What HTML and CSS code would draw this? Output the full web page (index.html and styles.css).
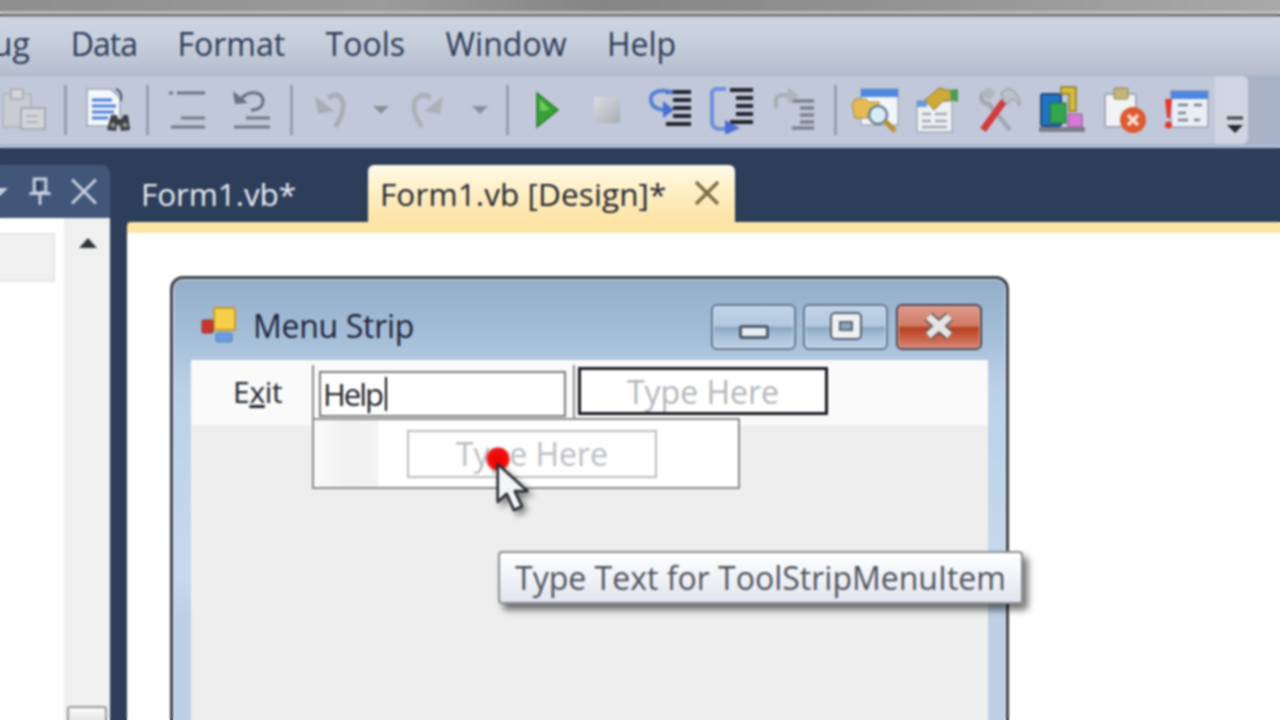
FILE: index.html
```html
<!DOCTYPE html>
<html lang="en">
<head>
<meta charset="utf-8">
<title>Menu Strip designer</title>
<link rel="stylesheet" href="styles.css">
</head>
<body>
<div class="app">
  <div class="topband"></div>
  <nav class="menubar">
    <span class="menu-debug">Debug</span>
    <span class="menu-item menu-data">Data</span>
    <span class="menu-item">Format</span>
    <span class="menu-item">Tools</span>
    <span class="menu-item">Window</span>
    <span class="menu-item">Help</span>
  </nav>
  <div class="toolrow">
    <div class="toolbar">
      <svg class="ico" viewBox="0 0 48 48"><rect x="3" y="8" width="28" height="33" rx="2" fill="#c9ccd2" stroke="#b3b6bc" stroke-width="2"/><rect x="11" y="3" width="12" height="10" fill="#d3d5d9" stroke="#b0b2b7" stroke-width="2"/><rect x="21" y="22" width="24" height="21" fill="#d2d4d9" stroke="#a8abb1" stroke-width="2"/><path d="M26 30h12M26 36h12" stroke="#b0b3b9" stroke-width="2"/></svg>
      <i class="sep"></i>
      <svg class="ico" viewBox="0 0 48 48"><path d="M3 3h24l9 9v28H3z" fill="#f4f7fc" stroke="#9aa4b8" stroke-width="1.500"/><path d="M8 14h20M8 20h24M8 26h22M8 32h16" stroke="#4d80d6" stroke-width="3"/><path d="M32 3c5 2 6 6 5 12" fill="none" stroke="#4a4f5c" stroke-width="2"/><path d="M23 44l4-15h6l1 4h4l1-4h5l2 15-9 1-1-6h-3l-1 6z" fill="#3d3f40"/><circle cx="29" cy="39" r="2.500" fill="#8c8f8e"/><circle cx="41" cy="39" r="2.500" fill="#8c8f8e"/></svg>
      <i class="sep"></i>
      <svg class="ico" viewBox="0 0 48 48"><path d="M5 7h4M13 7h28" stroke="#6d7380" stroke-width="3"/><path d="M17 32h24M7 41h34" stroke="#747a86" stroke-width="3"/></svg>
      <svg class="ico" viewBox="0 0 48 48"><path d="M15 15c2-10 22-12 22 0 0 7-7 9-12 9" fill="none" stroke="#6a707c" stroke-width="3"/><path d="M7 5l2 13 13-1z" fill="#6a707c"/><path d="M20 32h24M8 41h36" stroke="#747a86" stroke-width="3"/></svg>
      <i class="sep"></i>
      <svg class="ico" viewBox="0 0 48 48"><path d="M22 12c10-7 16 0 15 11-1 8-5 14-8 18" fill="none" stroke="#a9adb5" stroke-width="5"/><path d="M9 10l3 18 16-3z" fill="#a9adb5"/></svg>
      <svg class="drop" viewBox="0 0 16 10"><path d="M0 1h16L8 9z" fill="#8b8f98"/></svg>
      <svg class="ico" viewBox="0 0 48 48"><path d="M27 12C17 5 9 12 10 23c1 8 5 14 8 18" fill="none" stroke="#adb1b9" stroke-width="5"/><path d="M39 10l-3 18-16-3z" fill="#adb1b9"/></svg>
      <svg class="drop" viewBox="0 0 16 10"><path d="M0 1h16L8 9z" fill="#8b8f98"/></svg>
      <i class="sep"></i>
      <svg class="ico" viewBox="0 0 48 48"><path d="M15 7v34l21-17z" fill="#36a035" stroke="#2a7d2c" stroke-width="1.500"/><path d="M18 13v12l10-1z" fill="#6ecb5c"/></svg>
      <svg class="ico" viewBox="0 0 48 48"><defs><linearGradient id="st" x1="0" y1="0" x2="1" y2="1"><stop offset="0" stop-color="#dcdee3"/><stop offset="1" stop-color="#a9acb3"/></linearGradient></defs><rect x="11" y="11" width="26" height="26" rx="2" fill="url(#st)"/></svg>
      <svg class="ico" viewBox="0 0 48 48"><path d="M19 6h25M26 14h18M26 22h18M26 30h18M19 38h25" stroke="#22242b" stroke-width="4"/><path d="M26 7C14 2 2 6 4 15c1 7 9 9 16 9" fill="none" stroke="#5a7fd6" stroke-width="4"/><path d="M16 15l11 9-11 8z" fill="#4a6fd2"/></svg>
      <svg class="ico" viewBox="0 0 48 48"><path d="M22 4h23M28 12h17M28 20h17M28 28h17M22 36h23" stroke="#22242b" stroke-width="4"/><path d="M18 3H9C5 3 4 5 4 8v27c0 6 4 8 9 8h8" fill="none" stroke="#6f8fd8" stroke-width="4"/><path d="M17 34l15 8-15 7z" fill="#4a6fd2"/></svg>
      <svg class="ico" viewBox="0 0 48 48"><path d="M19 15h22M27 22h14M27 29h14M27 36h14M19 42h22" stroke="#7c818b" stroke-width="3.500"/><path d="M3 22v-8c0-4 3-5 7-5h8" fill="none" stroke="#a9adb5" stroke-width="4"/><path d="M15 1l11 9-11 8z" fill="#b0b4bc"/></svg>
      <i class="sep"></i>
      <svg class="ico" viewBox="0 0 48 48"><rect x="10" y="3" width="37" height="36" fill="#f2f5fa" stroke="#8d97a9"/><rect x="10" y="3" width="37" height="8" fill="#4f86df"/><path d="M1 19l3-6h11l3 3h10v16H4z" fill="#e5bb57" stroke="#a2873f"/><circle cx="27" cy="29" r="9" fill="#d9ecf6" stroke="#6d7f8b" stroke-width="2.500"/><path d="M34 35l10 10" stroke="#b98f35" stroke-width="5"/></svg>
      <svg class="ico" viewBox="0 0 48 48"><rect x="5" y="15" width="35" height="31" fill="#eef1f4" stroke="#8b93a1"/><rect x="5" y="15" width="10" height="6" fill="#6b96de"/><path d="M10 28h9M23 28h12M10 35h9M23 35h12M10 41h25" stroke="#a2a8b2" stroke-width="2.500"/><path d="M13 14L27 2l9 2c4 0 8 0 8 4 0 5-8 7-13 7l-9 9z" fill="#cfa93a" stroke="#8f7a3b"/><path d="M38 4l8-1v13l-7-2z" fill="#4d9a51"/></svg>
      <svg class="ico" viewBox="0 0 48 48"><path d="M9 7c-4 5 0 11 6 11L36 44" fill="none" stroke="#a3a8b0" stroke-width="4.500"/><path d="M15 2c-4 1-7 2-8 6l8 6 6-5c0-4-2-6-6-7z" fill="#b1b5bc"/><path d="M9 44L30 15" stroke="#d23b3b" stroke-width="7"/><path d="M30 16L27 7c4-5 10-6 14-1l4 6c1 2 2 6 0 8-1-4-4-7-8-7l-3 5z" fill="#bbbfc6" stroke="#8f949c"/></svg>
      <svg class="ico" viewBox="0 0 48 48"><rect x="3" y="8" width="20" height="32" rx="2" fill="#1f74c4" stroke="#234a78" stroke-width="2"/><path d="M23 1h15v24h-7V8h-8z" fill="#d9b93b" stroke="#8c7b2c" stroke-width="1.500"/><rect x="12" y="17" width="16" height="20" fill="#33a64e" stroke="#26663a"/><rect x="30" y="28" width="14" height="13" fill="#d679d8" stroke="#8a5b91"/><rect x="1" y="41" width="46" height="5" fill="#7b7f88"/></svg>
      <svg class="ico" viewBox="0 0 48 48"><rect x="4" y="8" width="31" height="33" rx="1" fill="#f1f3f6" stroke="#a2a9b5" stroke-width="2"/><rect x="13" y="2" width="14" height="11" rx="1" fill="#c4b679" stroke="#8d8459"/><circle cx="32" cy="34" r="13" fill="#de5a32"/><path d="M27 29l10 10M37 29L27 39" stroke="#fbe0d6" stroke-width="3.500"/></svg>
      <svg class="ico" viewBox="0 0 48 48"><rect x="9" y="5" width="37" height="36" fill="#eaeff6" stroke="#7b879a"/><rect x="9" y="5" width="37" height="8" fill="#4f86df"/><path d="M16 19h10M32 19h8M16 27h8M16 34h10M32 34h6" stroke="#7a808c" stroke-width="2.500"/><path d="M3 13h7l-2 19H5z" fill="#e8352f"/><circle cx="6.500" cy="39" r="3.500" fill="#e8352f"/></svg>
      <div class="overflow"><svg class="ovf" viewBox="0 0 18 18"><path d="M1 2h16" stroke="#3d4048" stroke-width="3"/><path d="M1 9h16l-8 8z" fill="#26282e"/></svg></div>
    </div>
  </div>
  <div class="workspace">
    <aside class="panel">
      <header class="panel-head">
        <svg class="panel-drop" viewBox="0 0 8 8"><path d="M-8 0H8L0 8z" fill="#c6cfdd"/></svg>
        <svg class="panel-ico" viewBox="0 0 28 30"><path d="M8 2h12v14H8zM3 17h22M14 17v12" fill="none" stroke="#c6cfdd" stroke-width="3"/><path d="M11 4h3v11h-3z" fill="#2c3c58"/></svg>
        <svg class="panel-ico" viewBox="0 0 28 28"><path d="M2 2l24 24M26 2L2 26" stroke="#c6cfdd" stroke-width="3"/></svg>
      </header>
      <div class="panel-body">
        <div class="panel-list"><div class="list-box"></div></div>
        <div class="panel-scroll">
          <svg class="scroll-up" viewBox="0 0 20 12"><path d="M1 11L10 1l9 10z" fill="#33363c"/></svg>
          <div class="scroll-thumb"></div>
        </div>
      </div>
    </aside>
    <main class="doc">
      <div class="tabs">
        <span class="tab">Form1.vb*</span>
        <span class="tab tab-active">Form1.vb [Design]*
          <svg class="tab-x" viewBox="0 0 26 26"><path d="M2 2l22 22M24 2L2 24" stroke="#7b6f48" stroke-width="3.500"/></svg>
        </span>
      </div>
      <div class="tab-rule"></div>
      <div class="canvas">
        <section class="form">
          <div class="titlebar">
            <svg class="form-ico" viewBox="0 0 36 36"><rect x="14" y="1" width="21" height="22" rx="2" fill="#f5cf4a" stroke="#c99a2b" stroke-width="2"/><rect x="2" y="13" width="11" height="13" rx="1" fill="#c9352c" stroke="#8f3a33"/><rect x="16" y="26" width="16" height="9" rx="1" fill="#6d9ce3" stroke="#5b7fb8"/></svg>
            <span class="form-title">Menu Strip</span>
            <div class="caption-btns">
              <button class="cap"><span class="glyph-min"></span></button>
              <button class="cap"><span class="glyph-max"></span></button>
              <button class="cap cap-close"><svg class="glyph-x" viewBox="0 0 32 26"><path d="M6 4l20 18M26 4L6 22" stroke="#5c5456" stroke-width="10"/><path d="M6 4l20 18M26 4L6 22" stroke="#e6e4e4" stroke-width="7"/></svg></button>
            </div>
          </div>
          <div class="client">
            <div class="strip">
              <span class="exit">E<u>x</u>it</span>
              <div class="strip-sep"></div>
              <div class="edit-box">Help<i class="caret"></i></div>
              <div class="strip-sep sep-b"></div>
              <div class="type-box">Type Here</div>
            </div>
            <div class="dropdown">
              <div class="drop-margin"></div>
              <div class="drop-box">Type Here</div>
            </div>
          </div>
        </section>
      </div>
    </main>
  </div>
  <div class="tooltip">Type Text for ToolStripMenuItem</div>
  <div class="click-dot"></div>
  <svg class="cursor" viewBox="0 0 40 58"><path d="M3 3v42l10-9 8 18 9-4-8-17h14z" fill="#f4f5f7" stroke="#2b2d33" stroke-width="3" stroke-linejoin="round"/></svg>
  <div class="video-soften"></div>
</div>
</body>
</html>
```

FILE: styles.css
```css
* { box-sizing: border-box; }
html, body { margin: 0; height: 100%; }
body { overflow: hidden; background: #2d3e5a; }
.app {
  position: relative;
  width: 1280px;
  height: 720px;
  overflow: hidden;
  display: flex;
  flex-direction: column;
  font-family: "Open Sans", "Noto Sans", sans-serif;
}
.video-soften {
  position: absolute;
  inset: 0;
  backdrop-filter: blur(0.8px);
  pointer-events: none;
}
.topband {
  height: 17px;
  flex: none;
  background:
    linear-gradient(to bottom, transparent 11px, #c8c8c8 12px, #d6d6d6 13px, #555 15px, #777 16px, #c9d0dd 17px),
    linear-gradient(to right, #8e8e8e, #9b9b9b 30%, #858585 47%, #939393 70%, #a9a9a9 100%);
}
.menubar {
  height: 58px;
  flex: none;
  display: flex;
  align-items: center;
  overflow: hidden;
  background: linear-gradient(to bottom, #cdd4e1, #c8cfdd 40%, #b6bece);
  color: #2c3a56;
  font-size: 32px;
  padding-bottom: 6px;
}
.menu-debug { margin-left: -68px; margin-right: 41px; }
.menu-item { margin-right: 40.5px; }
.menu-data { letter-spacing: -1px; }
.toolrow {
  height: 73px;
  flex: none;
  background: #a9b3c8;
  border-bottom: 3px solid #aebdd3;
  padding-top: 1px;
}
.toolbar {
  width: 1248px;
  height: 68px;
  padding-left: 6px;
  background: #c1c8da;
  border-radius: 0 6px 6px 0;
  display: grid;
  grid-template-columns: 36px 46px 40px 38px 44px 80px 2px 76px 26px 68px 36px 18px 60px 62px 66px 56px 74px 2px 78px 44px 80px 48px 78px 44px 1fr;
  align-items: center;
  justify-items: center;
}
.ico { width: 48px; height: 48px; display: block; }
.drop { width: 16px; height: 10px; display: block; }
.sep { display: block; width: 3px; height: 50px; background: #969daf; }
.overflow {
  justify-self: stretch;
  align-self: stretch;
  margin-left: 7px;
  background: #cfd5e1;
  border-radius: 0 6px 6px 0;
  display: flex;
  align-items: flex-end;
  justify-content: center;
  padding: 0 0 10px 7px;
}
.ovf { width: 18px; height: 18px; display: block; }
.workspace {
  flex: 1;
  min-height: 0;
  display: flex;
  background: #2d3e5a;
}
.panel {
  width: 110px;
  flex: none;
  margin-top: 17px;
  display: flex;
  flex-direction: column;
}
.panel-head {
  height: 53px;
  flex: none;
  background: #42567a;
  border-radius: 0 8px 0 0;
  display: flex;
  align-items: center;
  gap: 16px;
  padding: 0 12px 0 0;
}
.panel-drop { width: 8px; height: 8px; display: block; margin-right: auto; }
.panel-ico { width: 28px; height: 29px; display: block; }
.panel-body { flex: 1; display: flex; min-height: 0; }
.panel-list {
  width: 64px;
  flex: none;
  background: #fff;
  padding-top: 15px;
  overflow: hidden;
}
.list-box {
  width: 55px;
  height: 49px;
  background: #f1f1f1;
  border: 2px solid #e6e6e6;
  border-left: 0;
}
.panel-scroll {
  flex: 1;
  background: #f0f0f0;
  display: flex;
  flex-direction: column;
  align-items: center;
  padding-top: 19px;
}
.scroll-up { width: 20px; height: 12px; display: block; margin-left: 2px; }
.scroll-thumb {
  width: 40px;
  height: 20px;
  margin-top: auto;
  margin-bottom: -6px;
  background: linear-gradient(to bottom, #fafafa, #e0e0e0);
  border: 2px solid #9a9a9a;
  border-radius: 3px;
}
.doc {
  flex: 1;
  min-width: 0;
  margin-left: 17px;
  padding-top: 17px;
  display: flex;
  flex-direction: column;
}
.tabs {
  height: 57px;
  flex: none;
  display: flex;
  align-items: stretch;
  padding-left: 14px;
  font-size: 31.500px;
  letter-spacing: -0.1px;
}
.tab {
  width: 227px;
  display: flex;
  align-items: center;
  padding-bottom: 1px;
  color: #e9edf3;
}
.tab-active {
  width: 367px;
  padding-left: 12px;
  color: #22252f;
  letter-spacing: 0.1px;
  background: linear-gradient(to bottom, #fffaeb, #fff3d0 30%, #fde3a5);
  border-radius: 6px 6px 0 0;
}
.tab-x { width: 26px; height: 26px; margin-left: 28px; flex: none; }
.tab-rule {
  height: 11px;
  flex: none;
  background: #fde5a6;
  border-radius: 4px 0 0 0;
}
.canvas {
  flex: 1;
  min-height: 0;
  background: #fff;
  padding: 43px 0 0 43px;
}
.form {
  position: relative;
  width: 839px;
  height: 500px;
  border: 3px solid #3c4048;
  border-bottom: 0;
  border-radius: 13px 13px 0 0;
  background: linear-gradient(to bottom, #93aec9, #a6bfd9 60px, #bcd1e8 110px, #c6d9ee 300px, #bccfe5 340px);
  padding: 0 18px;
  box-shadow: inset 0 1px 0 #dbe5ee, inset -1px 0 0 #e6eef5, inset 1px 0 0 #eaf0f6;
  display: flex;
  flex-direction: column;
}
.titlebar {
  height: 81px;
  flex: none;
  display: flex;
  align-items: center;
  padding: 14px 6px 0 9px;
}
.form-ico { width: 36px; height: 36px; display: block; margin-top: -4px; }
.form-title {
  margin-left: 17px;
  font-size: 32px;
  letter-spacing: -0.3px;
  color: #1d2236;
  margin-top: -2px;
}
.caption-btns { margin-left: auto; display: flex; gap: 7px; }
.cap {
  width: 85px;
  height: 46px;
  padding: 0;
  border: 2px solid #61748e;
  border-radius: 6px;
  background: linear-gradient(to bottom, #bfd3e8, #b3c9e0 47%, #8aa5be 52%, #a6bfd8 70%, #bcd2e8);
  box-shadow: inset 0 0 0 1px #d7e3ef;
  display: flex;
  align-items: center;
  justify-content: center;
}
.cap-close {
  width: 86px;
  margin-left: 1px;
  border-color: #4f3f47;
  background: linear-gradient(to bottom, #dd9a8b, #cf7a66 47%, #b8401f 52%, #c65a40 72%, #d68878);
  box-shadow: inset 0 0 0 1px #e8b0a4;
}
.glyph-min {
  display: block;
  width: 30px;
  height: 14px;
  margin-top: 11px;
  background: #e9edf1;
  border: 3px solid #4e5a6b;
  border-radius: 3px;
}
.glyph-max {
  display: block;
  width: 30px;
  height: 26px;
  margin-top: -2px;
  background: #8fa3b8;
  border: 8px solid #eef0f2;
  outline: 2px solid #55606f;
  outline-offset: -1px;
  border-radius: 4px;
  box-shadow: inset 0 0 0 2px #5b6675;
}
.glyph-x { width: 34px; height: 28px; display: block; margin-top: -2px; }
.client {
  position: relative;
  flex: 1;
  min-height: 0;
  background: #eeeeee;
  font-size: 32px;
}
.strip {
  height: 65px;
  display: flex;
  align-items: flex-start;
  background: #fafafa;
}
.exit {
  width: 121px;
  padding: 11px 0 0 42px;
  color: #20232b;
  font-size: 30px;
  letter-spacing: -0.3px;
}
.strip-sep {
  width: 2px;
  height: 54px;
  margin-top: 5px;
  background: #8a8a8a;
}
.sep-b { margin-left: 7px; margin-right: 3px; }
.edit-box {
  width: 247px;
  height: 46px;
  margin: 11px 0 0 5px;
  padding-left: 2px;
  display: flex;
  align-items: center;
  background: #fff;
  border: 2px solid #7a7a7a;
  color: #1f2127;
  font-size: 31px;
  letter-spacing: -2px;
}
.caret { display: block; width: 2px; height: 34px; background: #111; margin-left: 3px; }
.type-box {
  width: 250px;
  height: 48px;
  margin-top: 7px;
  display: flex;
  align-items: center;
  justify-content: center;
  background: #fff;
  border: 3px solid #16181c;
  color: #b4b6ba;
}
.dropdown {
  position: absolute;
  left: 121px;
  top: 58px;
  width: 428px;
  height: 71px;
  display: flex;
  align-items: center;
  background: #fff;
  border: 2px solid #8a8a8a;
}
.drop-margin {
  width: 66px;
  align-self: stretch;
  background: linear-gradient(to right, #fbfbfb, #f1f1f1 50%, #f3f3f3 95%, #fff);
}
.drop-box {
  width: 250px;
  height: 48px;
  margin-left: 27px;
  display: flex;
  align-items: center;
  justify-content: center;
  background: #fefefe;
  border: 2px solid #bcbcbc;
  color: #bcbec2;
}
.tooltip {
  position: absolute;
  left: 498px;
  top: 551px;
  width: 525px;
  height: 53px;
  display: flex;
  align-items: center;
  justify-content: center;
  border: 2px solid #8d8d8f;
  border-radius: 4px;
  background: linear-gradient(to bottom, #ffffff, #eef0f6 60%, #e2e4ef);
  box-shadow: 5px 6px 7px rgba(0, 0, 0, .55);
  color: #4f535c;
  font-size: 32px;
  letter-spacing: 0;
}
.click-dot {
  position: absolute;
  left: 486px;
  top: 447px;
  width: 24px;
  height: 24px;
  border-radius: 50%;
  background: radial-gradient(circle, #f00000 0, #ef1010 55%, rgba(240, 60, 60, .5) 80%, rgba(240, 80, 80, 0) 100%);
}
.cursor {
  position: absolute;
  left: 495px;
  top: 461px;
  width: 36px;
  height: 53px;
  filter: drop-shadow(4px 4px 3px rgba(0, 0, 0, .45));
}
```
